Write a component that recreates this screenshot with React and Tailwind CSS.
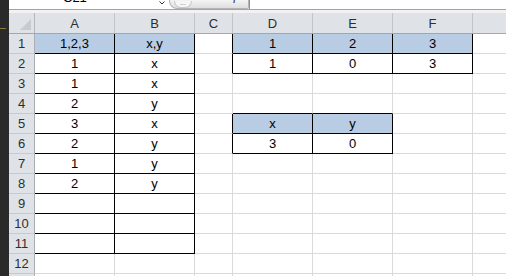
import React from "react";

const COLS = ["A", "B", "C", "D", "E", "F", "G"];
const COL_W = ["w-[80px]", "w-[80px]", "w-[38px]", "w-[80px]", "w-[80px]", "w-[80px]", "flex-1"];

const DATA = {
  1: { A: "1,2,3", B: "x,y", D: "1", E: "2", F: "3" },
  2: { A: "1", B: "x", D: "1", E: "0", F: "3" },
  3: { A: "1", B: "x" },
  4: { A: "2", B: "y" },
  5: { A: "3", B: "x", D: "x", E: "y" },
  6: { A: "2", B: "y", D: "3", E: "0" },
  7: { A: "1", B: "y" },
  8: { A: "2", B: "y" },
};

const FILL = new Set(["A1", "B1", "D1", "E1", "F1", "D5", "E5"]);

const REGIONS = [
  { r1: 1, r2: 11, c1: 0, c2: 1 },
  { r1: 1, r2: 2, c1: 3, c2: 5 },
  { r1: 5, r2: 6, c1: 3, c2: 4 },
];

function inB(r, c) {
  return REGIONS.some((g) => r >= g.r1 && r <= g.r2 && c >= g.c1 && c <= g.c2);
}

const ROWS = Array.from({ length: 13 }, (_, i) => i + 1);

function Cell({ r, c }) {
  const key = COLS[c] + r;
  const rightBlack = c < 6 && (inB(r, c) || inB(r, c + 1));
  const bottomBlack = inB(r, c) || inB(r + 1, c);
  const text = (DATA[r] && DATA[r][COLS[c]]) || "";
  return (
    <div
      className={[
        "h-[20px] shrink-0 flex items-center justify-center text-[13px] leading-[19px] text-black",
        COL_W[c],
        c < 6 ? "border-r" : "",
        "border-b",
        rightBlack ? "border-r-black" : "border-r-[#dadada]",
        bottomBlack ? "border-b-black" : "border-b-[#dadada]",
        FILL.has(key) ? "bg-[#b8cce4]" : "bg-white",
      ].join(" ")}
    >
      {text}
    </div>
  );
}

export default function App() {
  return (
    <div className="w-[506px] h-[276px] overflow-hidden flex bg-white font-['Liberation_Sans',Arial,sans-serif]">
      {/* dark left strip */}
      <div className="w-[9px] shrink-0 bg-[#2a2a2a] flex flex-col">
        <div className="h-[28px]" />
        <div className="h-[1px] w-[6px] bg-[#8c7c3c]" />
      </div>

      <div className="flex-1 flex flex-col min-w-0">
        {/* formula bar */}
        <div className="h-[10px] shrink-0 flex border-b border-b-[#a3a3a3] bg-white overflow-hidden">
          <div className="w-[146px] shrink-0 flex pl-[54px]">
            <span className="text-[13px] leading-[13px] mt-[-9px] text-black">C21</span>
          </div>
          <div className="w-[14px] shrink-0 flex justify-center pt-[1px]">
            <svg width="6" height="4" viewBox="0 0 6 4">
              <path d="M0.5 0.5 L3 3 L5.5 0.5" fill="none" stroke="#333" strokeWidth="1" />
            </svg>
          </div>
          <div className="w-[80px] shrink-0 h-[9px] rounded-bl-[8px] rounded-br-[2px] border border-t-0 border-[#b4b4b4] bg-gradient-to-b from-[#f4f4f4] to-[#dedede] flex items-end pl-[4px] pr-[6px]">
            <div className="w-[18px] h-[7px] rounded-b-full border border-t-0 border-[#c8c8c8] bg-[#f7f7f7] flex justify-center items-end">
              <div className="w-[6px] h-[1px] bg-[#d0d0d0] mb-[2px]" />
            </div>
            <div className="flex-1" />
            <span className="italic text-[12px] leading-[12px] mb-[6px] text-[#222] font-['Liberation_Serif',serif]">fx</span>
          </div>
          <div className="flex-1 border-l border-l-[#8d8d8d] bg-white" />
        </div>
        <div className="h-[3px] shrink-0 bg-[#f2f2f2]" />

        {/* column header row */}
        <div className="h-[21px] shrink-0 flex bg-[#dfe3e8] border-b border-b-[#a2a7ad]">
          <div className="w-[26px] shrink-0 border-r border-r-[#b4b8bd] flex items-end justify-end pr-[3px] pb-[3px]">
            <svg width="11" height="11" viewBox="0 0 11 11">
              <polygon points="11,0 11,11 0,11" fill="#c7cbd0" />
            </svg>
          </div>
          {COLS.map((c, i) => (
            <div
              key={c}
              className={[
                "shrink-0 flex items-center justify-center text-[13px] leading-[20px] pt-[1px] text-[#2e2e2e]",
                COL_W[i],
                i < 6 ? "border-r border-r-[#c2c6cb]" : "",
              ].join(" ")}
            >
              {i < 6 ? c : ""}
            </div>
          ))}
        </div>

        {/* rows */}
        {ROWS.map((r) => (
          <div key={r} className="flex shrink-0">
            <div className="w-[26px] h-[20px] shrink-0 bg-[#dfe3e8] border-r border-r-[#a9aeb4] border-b border-b-[#c6cace] flex items-center justify-center text-[13px] leading-[19px] text-[#2e2e2e]">
              {r < 13 ? r : ""}
            </div>
            {COLS.map((_, c) => (
              <Cell key={c} r={r} c={c} />
            ))}
          </div>
        ))}
      </div>
    </div>
  );
}
